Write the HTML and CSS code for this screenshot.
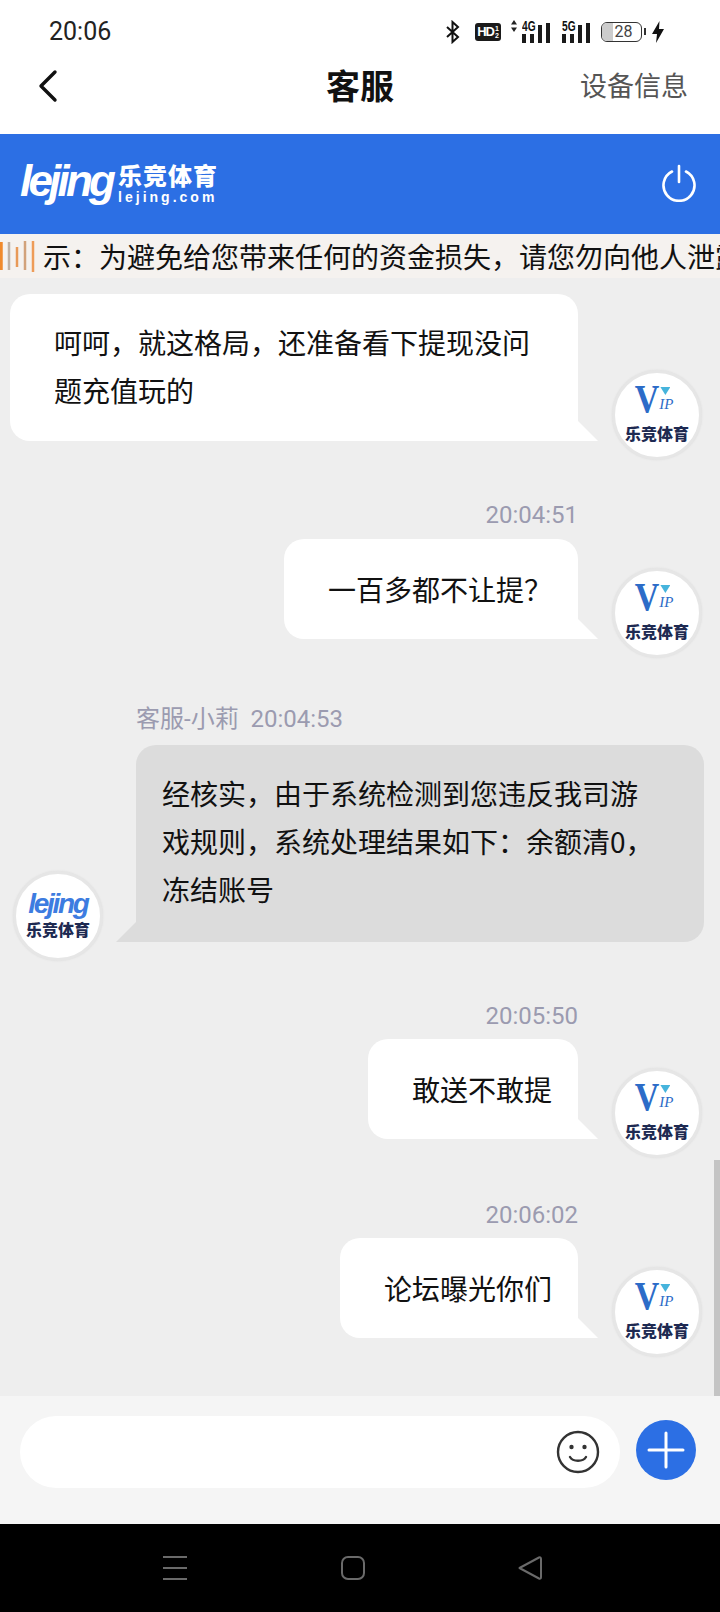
FILE: index.html
```html
<!DOCTYPE html>
<html lang="zh">
<head>
<meta charset="utf-8">
<title>客服</title>
<link rel="stylesheet" href="styles.css">
</head>
<body>
<div class="app">
  <div class="status">
    <span class="clock">20:06</span>
    <div class="status-icons">
      <svg class="ic-bt" width="16" height="24" viewBox="0 0 16 24"><path d="M2 7l11 10-5.500 5V2l5.500 5L2 17" fill="none" stroke="#111" stroke-width="2"/></svg>
      <span class="hd">HD<span class="hd-sub">1<br>2</span></span>
      <div class="sig">
        <svg class="updown" width="6" height="12" viewBox="0 0 6 12"><path d="M3 0l3 4.500H0zM3 12l3-4.500H0z" fill="#222"/></svg>
        <span class="sig-label">4G</span>
        <span class="bars"><i class="b1"></i><i class="b2"></i><i class="b3"></i><i class="b4"></i></span>
      </div>
      <div class="sig sig-five">
        <span class="sig-label">5G</span>
        <span class="bars"><i class="b1"></i><i class="b2"></i><i class="b3"></i><i class="b4"></i></span>
      </div>
      <div class="battery"><span class="level"></span><span class="pct">28</span></div>
      <span class="nub"></span>
      <svg class="ic-bolt" width="14" height="24" viewBox="0 0 14 24"><path d="M8.500 1L1 14h5l-1 9 8-14H8z" fill="#111"/></svg>
    </div>
  </div>

  <header class="nav">
    <svg class="back" width="24" height="34" viewBox="0 0 24 34"><path d="M19 3L5 17l14 14" fill="none" stroke="#111" stroke-width="3.400" stroke-linecap="round" stroke-linejoin="round"/></svg>
    <h1 class="title">客服</h1>
    <span class="device">设备信息</span>
  </header>

  <div class="brand">
    <div class="logo">
      <span class="logo-word">lejing</span>
      <div class="logo-side">
        <span class="logo-cn">乐竞体育</span>
        <span class="logo-url">lejing.com</span>
      </div>
    </div>
    <svg class="power" width="38" height="38" viewBox="0 0 38 38"><path d="M12 7.500a15.500 15.500 0 1 0 14 0" fill="none" stroke="#fff" stroke-width="2.600" stroke-linecap="round"/><path d="M19 2v16" fill="none" stroke="#fff" stroke-width="2.600" stroke-linecap="round"/></svg>
  </div>

  <div class="notice">
    <svg class="wave" width="38" height="34" viewBox="0 0 38 34">
      <g fill="none">
        <path d="M1 3v28" stroke="#f08a2c" stroke-width="3.500"/>
        <path d="M9 3v28" stroke="#bfb2a6" stroke-width="2.500"/>
        <path d="M17 8v20" stroke="#e89a58" stroke-width="2.500"/>
        <path d="M25 2v29" stroke="#d2a27a" stroke-width="2.500"/>
        <path d="M33 2v31" stroke="#ee9c58" stroke-width="2.500"/>
      </g>
    </svg>
    <div class="notice-text">示&#xFF1A;为避免给您带来任何的资金损失&#xFF0C;请您勿向他人泄露</div>
  </div>

  <main class="chat">
    <div class="row row-out">
      <div class="bubble out wide">呵呵&#xFF0C;就这格局&#xFF0C;还准备看下提现没问题充值玩的</div>
      <div class="avatar"><span class="mark"><span class="mark-v">V</span><span class="mark-ip">IP</span><i class="mark-tip"></i></span><span class="avatar-cn">乐竞体育</span></div>
    </div>

    <div class="time time-out t1">20:04:51</div>
    <div class="row row-out">
      <div class="bubble out">一百多都不让提&#xFF1F;</div>
      <div class="avatar"><span class="mark"><span class="mark-v">V</span><span class="mark-ip">IP</span><i class="mark-tip"></i></span><span class="avatar-cn">乐竞体育</span></div>
    </div>

    <div class="time time-in">客服-小莉&nbsp; 20:04:53</div>
    <div class="row row-in">
      <div class="avatar"><span class="mark-word">lejing</span><span class="avatar-cn">乐竞体育</span></div>
      <div class="bubble in">经核实&#xFF0C;由于系统检测到您违反我司游戏规则&#xFF0C;系统处理结果如下&#xFF1A;余额清0&#xFF0C;冻结账号</div>
    </div>

    <div class="time time-out t3">20:05:50</div>
    <div class="row row-out">
      <div class="bubble out">敢送不敢提</div>
      <div class="avatar"><span class="mark"><span class="mark-v">V</span><span class="mark-ip">IP</span><i class="mark-tip"></i></span><span class="avatar-cn">乐竞体育</span></div>
    </div>

    <div class="time time-out t4">20:06:02</div>
    <div class="row row-out">
      <div class="bubble out">论坛曝光你们</div>
      <div class="avatar"><span class="mark"><span class="mark-v">V</span><span class="mark-ip">IP</span><i class="mark-tip"></i></span><span class="avatar-cn">乐竞体育</span></div>
    </div>
    <span class="scrollbar"></span>
  </main>

  <div class="composer">
    <div class="field">
      <svg width="44" height="44" viewBox="0 0 44 44"><circle cx="22" cy="22" r="20" fill="none" stroke="#333" stroke-width="2.400"/><circle cx="15.500" cy="17" r="2.200" fill="#333"/><circle cx="28.500" cy="17" r="2.200" fill="#333"/><path d="M14 27c3 5 13 5 16 0" fill="none" stroke="#333" stroke-width="2.400" stroke-linecap="round"/></svg>
    </div>
    <button class="add" type="button"><svg width="38" height="38" viewBox="0 0 38 38"><path d="M19 2v34M2 19h34" fill="none" stroke="#fff" stroke-width="3" stroke-linecap="round"/></svg></button>
  </div>

  <nav class="sysnav">
    <svg width="26" height="26" viewBox="0 0 26 26"><path d="M1 2h24M1 13h24M1 24h24" stroke="#6a6a6a" stroke-width="2" fill="none"/></svg>
    <svg width="26" height="26" viewBox="0 0 26 26"><rect x="2" y="2" width="22" height="22" rx="6" fill="none" stroke="#6a6a6a" stroke-width="2"/></svg>
    <svg width="26" height="26" viewBox="0 0 26 26"><path d="M2.500 13L22 2.500q2-.8 2 1.500v18q0 2.300-2 1.500z" fill="none" stroke="#6a6a6a" stroke-width="2" stroke-linejoin="round"/></svg>
  </nav>
</div>
</body>
</html>
```

FILE: styles.css
```css
* { box-sizing: border-box; }

html, body {
  margin: 0;
  padding: 0;
}

body {
  font-family: "Noto Sans CJK SC", "Liberation Sans", sans-serif;
  color: #111;
  background: #000;
}

.app {
  width: 720px;
  height: 1612px;
  display: flex;
  flex-direction: column;
  overflow: hidden;
}

/* Status bar */
.status {
  height: 50px;
  padding: 13px 55px 0 49px;
  display: flex;
  justify-content: space-between;
  align-items: center;
  background: #fff;
}

.clock {
  font-family: Roboto, "Liberation Sans", sans-serif;
  font-size: 25px;
  color: #222;
}

.status-icons {
  display: flex;
  align-items: center;
  font-family: "Liberation Sans", sans-serif;
}

.ic-bt { margin-right: 14px; }

.hd {
  width: 26px;
  height: 18px;
  border-radius: 3px;
  background: #1a1a1a;
  color: #fff;
  font-size: 13px;
  font-weight: 700;
  letter-spacing: -1px;
  display: flex;
  align-items: center;
  justify-content: center;
  margin-right: 21px;
}

.hd-sub {
  font-size: 7px;
  line-height: 7px;
  margin-left: 1px;
  letter-spacing: 0;
}

.sig {
  position: relative;
  width: 28px;
  height: 22px;
  margin-right: 12px;
  display: flex;
  align-items: flex-end;
}

.sig-five { margin-right: 11px; }

.updown {
  position: absolute;
  left: -11px;
  top: -1px;
}

.sig-label {
  position: absolute;
  left: 0;
  top: -2px;
  font-size: 15px;
  line-height: 13px;
  font-weight: 700;
  transform: scaleX(.68);
  transform-origin: left top;
  white-space: nowrap;
}

.bars {
  display: flex;
  align-items: flex-end;
  gap: 4px;
}

.bars i {
  width: 4px;
  background: #1a1a1a;
}

.b1 { height: 9px; }
.b2 { height: 9px; }
.b3 { height: 18px; }
.b4 { height: 20px; }

.battery {
  position: relative;
  width: 41px;
  height: 20px;
  border: 1.500px solid #333;
  border-radius: 6px;
  overflow: hidden;
  text-align: center;
}

.level {
  position: absolute;
  left: 0;
  top: 0;
  width: 11px;
  height: 100%;
  background: #ccc;
}

.pct {
  position: relative;
  display: block;
  padding-left: 4px;
  font-family: Roboto, sans-serif;
  font-size: 16px;
  line-height: 17px;
  color: #444;
}

.nub {
  width: 2px;
  height: 7px;
  background: #333;
  margin: 0 5px 0 2px;
}

/* Title row */
.nav {
  position: relative;
  height: 84px;
  background: #fff;
  display: flex;
  align-items: center;
  justify-content: center;
  padding-bottom: 16px;
}

.back {
  position: absolute;
  left: 36px;
  top: 19px;
}

.title {
  margin: 0;
  font-size: 34px;
  font-weight: 700;
  color: #111;
}

.device {
  position: absolute;
  right: 32px;
  top: 15px;
  font-size: 27px;
  color: #555;
}

/* Blue brand band */
.brand {
  height: 100px;
  background: #2c6fe4;
  display: flex;
  align-items: center;
  justify-content: space-between;
  padding: 0 22px 3px 20px;
}

.logo {
  display: flex;
  align-items: center;
  gap: 6px;
  color: #fff;
}

.logo-word {
  font-family: "Liberation Sans", sans-serif;
  font-size: 44px;
  font-weight: 700;
  font-style: italic;
  letter-spacing: -3.800px;
  line-height: 50px;
  padding-bottom: 4px;
}

.logo-side {
  display: flex;
  flex-direction: column;
}

.logo-cn {
  font-size: 24px;
  font-weight: 900;
  line-height: 28px;
  letter-spacing: 1px;
}

.logo-url {
  font-family: "Liberation Sans", sans-serif;
  font-size: 14px;
  font-weight: 700;
  line-height: 16px;
  letter-spacing: 3px;
}

/* Scrolling notice */
.notice {
  height: 44px;
  background: #f5f2ef;
  display: flex;
  align-items: center;
  overflow: hidden;
}

.wave {
  flex: none;
  width: 38px;
  margin-right: 5px;
}

.notice-text {
  font-size: 28px;
  line-height: 40px;
  white-space: nowrap;
  color: #111;
}

/* Conversation */
.chat {
  position: relative;
  flex: 1;
  background: #eee;
  padding: 16px 0 0;
}

.row {
  display: flex;
  align-items: flex-end;
}

.row-out {
  justify-content: flex-end;
  padding-right: 18px;
}

.row-in { padding-left: 13px; }

.avatar {
  position: relative;
  flex: none;
  width: 90px;
  height: 90px;
  margin-bottom: -19px;
  border-radius: 50%;
  background: #fff;
  border: 3px solid #e6e6e6;
  box-shadow: 0 0 2px #ddd;
  display: flex;
  flex-direction: column;
  align-items: center;
  justify-content: flex-start;
}

.row-out .avatar { margin-left: 34px; }
.row-in .avatar { margin-right: 33px; }

.mark {
  position: relative;
  height: 38px;
  margin: 10px 6px 2px 0;
  display: flex;
  align-items: flex-start;
}

.mark-v {
  font-family: "Liberation Serif", serif;
  font-size: 34px;
  line-height: 38px;
  font-weight: 700;
  color: #2c6cc8;
  transform: scaleY(1.15);
  transform-origin: center bottom;
}

.mark-ip {
  margin-top: 13px;
  font-family: "Liberation Serif", serif;
  font-size: 15px;
  line-height: 17px;
  font-style: italic;
  color: #2c6cc8;
}

.mark-tip {
  position: absolute;
  right: 3px;
  top: 4px;
  width: 10px;
  height: 8px;
  background: #46b4dc;
  clip-path: polygon(0 0, 100% 0, 50% 100%);
}

.mark-word {
  font-family: "Liberation Sans", sans-serif;
  font-size: 28px;
  font-weight: 700;
  font-style: italic;
  letter-spacing: -2.300px;
  line-height: 30px;
  margin-top: 15px;
  color: #3d7ce0;
}

.avatar-cn {
  font-size: 16px;
  font-weight: 900;
  line-height: 20px;
  color: #1e2a52;
  white-space: nowrap;
}

.bubble {
  position: relative;
  font-size: 28px;
  line-height: 48px;
  color: #111;
}

.bubble::after {
  content: "";
  position: absolute;
  bottom: 0;
  width: 20px;
  height: 20px;
}

.out {
  background: #fff;
  padding: 26px 26px 26px 44px;
  border-radius: 20px 20px 0 20px;
}

.out::after {
  left: 100%;
  background: #fff;
  clip-path: polygon(0 0, 100% 100%, 0 100%);
}

.wide {
  width: 568px;
  padding: 24px 26px 27px 44px;
}

.in {
  width: 568px;
  background: #dcdcdc;
  padding: 24px 44px 29px 26px;
  border-radius: 20px 20px 20px 0;
}

.in::after {
  right: 100%;
  background: #dcdcdc;
  clip-path: polygon(100% 0, 100% 100%, 0 100%);
}

.time {
  font-size: 24px;
  line-height: 30px;
  color: #9b9bb0;
  font-family: Roboto, "Noto Sans CJK SC", sans-serif;
}

.time-out {
  text-align: right;
  padding-right: 142px;
}

.time-in { padding-left: 136px; margin: 65px 0 11px; }
.t1 { margin: 59px 0 9px; }
.t3 { margin: 59px 0 8px; }
.t4 { margin: 61px 0 8px; }

.scrollbar {
  position: absolute;
  right: 0;
  top: 882px;
  width: 6px;
  height: 236px;
  background: #c4c4c4;
}

/* Message input */
.composer {
  height: 128px;
  background: #f5f5f5;
  display: flex;
  align-items: flex-start;
  padding: 20px 0 0 20px;
}

.field {
  width: 600px;
  height: 72px;
  background: #fff;
  border-radius: 36px;
  display: flex;
  align-items: center;
  justify-content: flex-end;
  padding-right: 20px;
}

.add {
  width: 60px;
  height: 60px;
  margin: 4px 0 0 16px;
  padding: 0;
  border: 0;
  border-radius: 50%;
  background: #2c6fe4;
  display: flex;
  align-items: center;
  justify-content: center;
}

/* System navigation */
.sysnav {
  height: 88px;
  background: #000;
  display: flex;
  align-items: center;
  padding: 0 0 0 162px;
  gap: 151.500px;
}
```
